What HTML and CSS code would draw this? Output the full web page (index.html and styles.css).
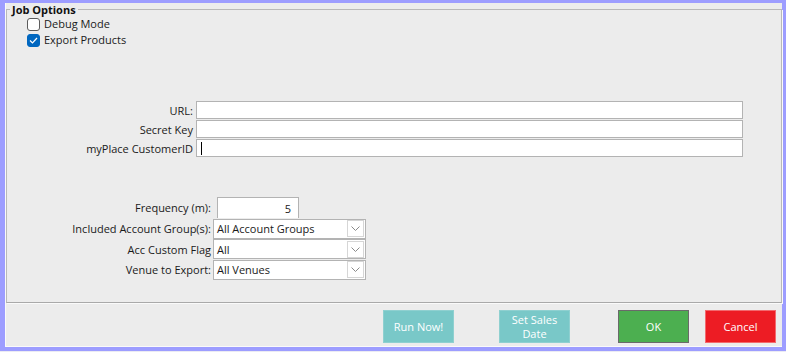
FILE: index.html
```html
<!DOCTYPE html>
<html lang="en">
<head>
    <meta charset="UTF-8">
    <title>Job Options</title>
    <link rel="stylesheet" href="styles.css">
</head>
<body>
    <div class="window">
        <fieldset class="group">
            <legend>Job Options</legend>

            <!-- Flags -->
            <div class="checks">
                <label class="check"><span class="box"></span>Debug Mode</label>
                <label class="check"><span class="box checked">
                    <svg width="9" height="7" viewBox="0 0 9 7"><path d="M1 3.5 L3.5 6 L8 1" fill="none" stroke="#fff" stroke-width="1.2"/></svg>
                </span>Export Products</label>
            </div>

            <!-- Connection -->
            <div class="conn">
                <span class="lbl">URL:</span>
                <div class="field"></div>
                <span class="lbl">Secret Key</span>
                <div class="field"></div>
                <span class="lbl">myPlace CustomerID</span>
                <div class="field"><span class="caret"></span></div>
            </div>

            <!-- Schedule / filters -->
            <div class="opts">
                <span class="lbl">Frequency (m):</span>
                <div class="num">5</div>
                <span class="lbl">Included Account Group(s):</span>
                <div class="combo"><span>All Account Groups</span><span class="drop"><svg width="9" height="5" viewBox="0 0 9 5"><path d="M0.5 0.5 L4.5 4.5 L8.5 0.5" fill="none" stroke="#8a8a8a" stroke-width="1"/></svg></span></div>
                <span class="lbl">Acc Custom Flag</span>
                <div class="combo"><span>All</span><span class="drop"><svg width="9" height="5" viewBox="0 0 9 5"><path d="M0.5 0.5 L4.5 4.5 L8.5 0.5" fill="none" stroke="#8a8a8a" stroke-width="1"/></svg></span></div>
                <span class="lbl">Venue to Export:</span>
                <div class="combo"><span>All Venues</span><span class="drop"><svg width="9" height="5" viewBox="0 0 9 5"><path d="M0.5 0.5 L4.5 4.5 L8.5 0.5" fill="none" stroke="#8a8a8a" stroke-width="1"/></svg></span></div>
            </div>
        </fieldset>

        <div class="actions">
            <button class="btn teal run">Run Now!</button>
            <button class="btn teal sales">Set Sales<br>Date</button>
            <button class="btn ok">OK</button>
            <button class="btn cancel">Cancel</button>
        </div>
    </div>
</body>
</html>
```

FILE: styles.css
```css
* {
    box-sizing: border-box;
    margin: 0;
    padding: 0;
}

body {
    background-color: #ebebf3;
    font-family: 'Open Sans', 'Liberation Sans', Arial, sans-serif;
    font-size: 11px;
    line-height: 15px;
    color: #1a1a1a;
}

/* Window frame */
.window {
    width: 786px;
    height: 351px;
    background-color: #ececec;
    border: solid #9d9dff;
    border-width: 3px 4px 4px 5px;
    box-shadow: inset 1px -1px 0 #fafafa;
    display: flex;
    flex-direction: column;
}

/* Group box */
.group {
    margin: 0 0 0 1px;
    width: 776px;
    height: 300px;
    border: 1px solid #b9b9b9;
    border-bottom-color: #a9a9a9;
    box-shadow: 1px 1px 0 #fafafa;
    padding: 0;
}

.group legend {
    margin-left: 3px;
    padding: 0 2px;
    font-weight: bold;
    line-height: 13px;
    color: #111;
}

/* Checkboxes */
.checks {
    margin: 0 0 0 20px;
    display: flex;
    flex-direction: column;
}

.check {
    display: flex;
    align-items: center;
    height: 16px;
    line-height: 16px;
}

.box {
    width: 13px;
    height: 13px;
    border: 1px solid #5c5c5c;
    border-radius: 3px;
    background-color: #fff;
    margin-right: 4px;
    display: flex;
    align-items: center;
    justify-content: center;
}

.box.checked {
    background-color: #0067c0;
    border-color: #0067c0;
}

/* Label + field grids */
.lbl {
    text-align: right;
    white-space: nowrap;
}

.conn {
    margin-top: 53px;
    display: grid;
    grid-template-columns: 186px 547px;
    column-gap: 3px;
    row-gap: 1px;
    align-items: center;
}

.field {
    height: 18px;
    background-color: #fff;
    border: 1px solid #b3b3b3;
    display: flex;
    align-items: center;
    padding-left: 4px;
}

.caret {
    width: 1px;
    height: 13px;
    background-color: #000;
}

.opts {
    margin-top: 40px;
    display: grid;
    grid-template-columns: 204px 153px;
    column-gap: 2px;
    row-gap: 0.5px;
    align-items: center;
}

.num {
    margin-left: 4px;
    width: 82px;
    height: 21px;
    background-color: #fff;
    border: 1px solid #b3b3b3;
    border-bottom: none;
    text-align: right;
    padding: 3px 7px 0 0;
}

.combo {
    height: 20px;
    background-color: #fff;
    border: 1px solid #b3b3b3;
    display: flex;
    align-items: center;
    justify-content: space-between;
    padding-left: 3px;
}

.drop {
    width: 17px;
    height: 17px;
    margin-right: 1px;
    border: 1px solid #d6d6d6;
    display: flex;
    align-items: center;
    justify-content: center;
}

/* Bottom buttons */
.actions {
    flex: 1;
    display: flex;
    align-items: flex-start;
    padding-top: 7px;
}

.btn {
    width: 71px;
    height: 33px;
    font-family: inherit;
    font-size: 11px;
    line-height: 14px;
    color: #fff;
    border: 1px solid transparent;
}

.teal {
    background-color: #79c8c8;
    border-color: #8fd0d0;
}

.run {
    margin-left: 378px;
}

.sales {
    margin-left: 45px;
}

.ok {
    margin-left: 48px;
    background-color: #4caf50;
    border-color: #6a6a6a;
}

.cancel {
    margin-left: 16px;
    background-color: #ed1c24;
    border-color: #f26a6f;
}
```
